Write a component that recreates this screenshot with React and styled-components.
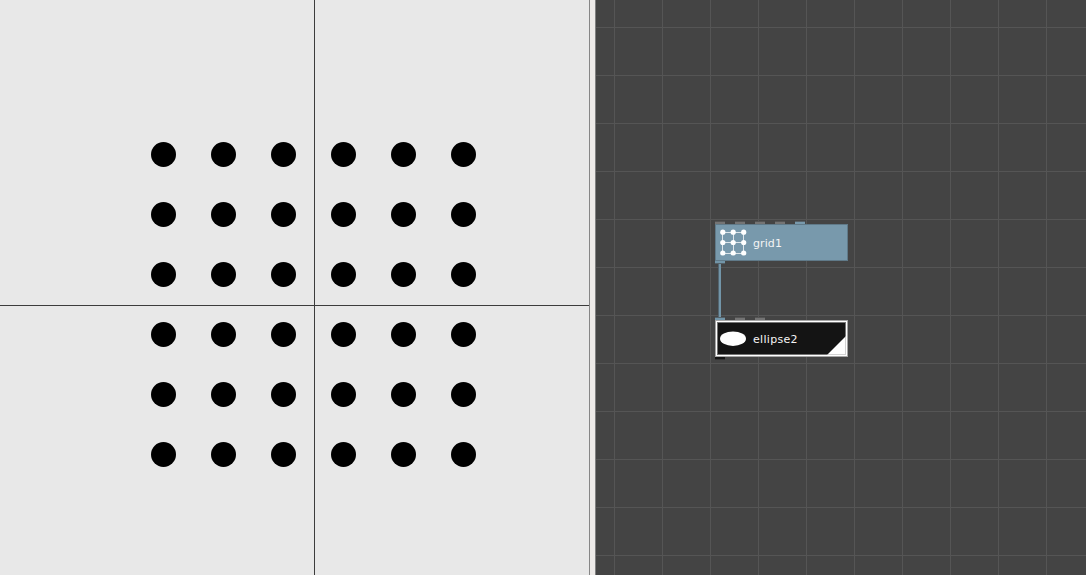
import React from "react";
import styled, { createGlobalStyle } from "styled-components";

const GlobalStyle = createGlobalStyle`
  * { box-sizing: border-box; }
  body { margin: 0; overflow: hidden; }
`;

const Workspace = styled.main`
  display: grid;
  grid-template-columns: 589px 7px 1fr;
  width: 100vw;
  height: 100vh;
  font-family: "DejaVu Sans", sans-serif;
`;

const Viewer = styled.section`
  overflow: hidden;
  background: #e8e8e8;
`;

const Drawing = styled.svg`
  display: block;
`;

const Divider = styled.div`
  background: #edeae8;
  border-left: 1px solid #868686;
  border-right: 1px solid #808080;
`;

const Network = styled.section`
  position: relative;
  overflow: hidden;
  background-color: #444;
  background-image:
    linear-gradient(90deg, #555 1px, transparent 1px),
    linear-gradient(#555 1px, transparent 1px);
  background-size: 48px 48px;
  background-position: 18px 27px;
`;

const Node = styled.div`
  position: absolute;
  left: 119px;
  top: ${(p) => p.$top}px;
  width: 133px;
  display: flex;
  flex-direction: column;
`;

const Ports = styled.div`
  display: flex;
  gap: 10px;
`;

const Port = styled.i`
  width: 10px;
  height: 3px;
  background: ${(p) => p.$color || "#747474"};
  border-${(p) => (p.$output ? "bottom" : "top")}: 1px solid rgba(68, 68, 68, 0.65);
`;

const NodeBody = styled.div`
  position: relative;
  height: 37px;
  display: flex;
  align-items: center;
  padding-left: 4px;
  background: ${(p) => (p.$selected ? "#141414" : "#7899ac")};

  &::after {
    content: "";
    position: absolute;
    inset: 0;
    box-shadow: ${(p) =>
      p.$selected
        ? "inset 0 0 0 1px #a6a6a6, inset 0 0 0 2px #fff, inset 0 0 0 3px rgba(180, 180, 180, 0.6)"
        : "inset 0 0 0 1px #607a89"};
  }
`;

const NodeName = styled.span`
  margin-left: 5px;
  padding-top: 2px;
  color: #f4f4f4;
  font-size: 11px;
  line-height: 14px;
  letter-spacing: ${(p) => p.$tracking || 0}px;
`;

const Wire = styled.div`
  position: absolute;
  left: 122px;
  top: 263px;
  width: 3px;
  height: 56px;
  background: #7295a8;
  border-left: 1px solid #536570;
`;

const RenderedFlag = styled.i`
  align-self: flex-end;
  margin: 0 2px 2px auto;
  width: 19px;
  height: 19px;
  background: #fff;
  clip-path: polygon(100% 0, 100% 100%, 0 100%);
`;

const steps = [0, 1, 2, 3, 4, 5];
const iconX = [3.8, 14.2, 24.7];
const iconY = [4.2, 14.5, 25];

function GridIcon() {
  return (
    <Drawing width="29" height="30" viewBox="0 0 29 30">
      <path d="M4 4.5H25M4 14.5H25M4 25.5H25M3.5 4V25M14.5 4V25M24.5 4V25" stroke="#dce5ea" fill="none" />
      {iconY.map((y) =>
        iconX.map((x) => <circle key={`${x}-${y}`} cx={x} cy={y} r="2.6" fill="#fff" />)
      )}
    </Drawing>
  );
}

function EllipseIcon() {
  return (
    <Drawing width="29" height="27" viewBox="0 0 29 27">
      <ellipse cx="14" cy="13.7" rx="13" ry="7.2" fill="#fff" />
    </Drawing>
  );
}

export default function App() {
  return (
    <>
      <GlobalStyle />
      <Workspace>
        <Viewer>
          <Drawing width="589" height="575">
            {steps.map((row) =>
              steps.map((col) => (
                <circle key={`${row}-${col}`} cx={163.5 + col * 60} cy={154.5 + row * 60} r="12.5" />
              ))
            )}
            <path d="M314.5 0V575M0 305.5H589" stroke="#3c3c3c" fill="none" />
          </Drawing>
        </Viewer>
        <Divider />
        <Network>
          <Wire />
          <Node $top={221}>
            <Ports>
              <Port />
              <Port />
              <Port />
              <Port />
              <Port $color="#7899ac" />
            </Ports>
            <NodeBody>
              <GridIcon />
              <NodeName $tracking={0.1}>grid1</NodeName>
            </NodeBody>
            <Ports>
              <Port $output $color="#7295a8" />
            </Ports>
          </Node>
          <Node $top={317}>
            <Ports>
              <Port $color="#7295a8" />
              <Port />
              <Port />
            </Ports>
            <NodeBody $selected>
              <EllipseIcon />
              <NodeName $tracking={0.3}>ellipse2</NodeName>
              <RenderedFlag />
            </NodeBody>
            <Ports>
              <Port $output $color="#141414" />
            </Ports>
          </Node>
        </Network>
      </Workspace>
    </>
  );
}
